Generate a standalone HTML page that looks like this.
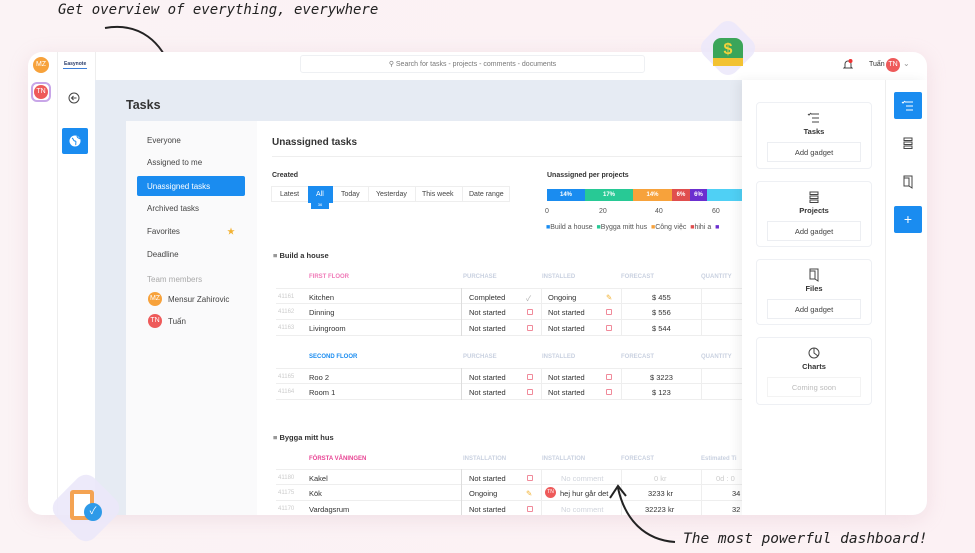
<!DOCTYPE html>
<html><head><meta charset="utf-8"><style>
*{margin:0;padding:0;box-sizing:border-box}
html,body{width:975px;height:553px;overflow:hidden}
body{background:linear-gradient(90deg,#fbf3f5,#fcf1f4);font-family:"Liberation Sans","Noto Sans CJK SC",sans-serif;position:relative;color:#333}
.a{position:absolute}
.hand{font-family:"DejaVu Sans Mono",monospace;font-style:italic;font-size:14px;color:#222;white-space:nowrap}
.card{left:28px;top:52px;width:899px;height:463px;background:#fff;border-radius:14px;overflow:hidden;box-shadow:0 4px 20px rgba(200,150,170,.2)}
.av{border-radius:50%;color:#fff;font-size:7px;text-align:center}
.nav{font-size:8px;color:#444}
.t{font-size:7px}
.row{position:absolute;left:0;height:16px;width:480px;border-bottom:1px solid #eee;font-size:7.5px;color:#333}
.row span{position:absolute;top:4px}
.row span.id{top:5px;color:#ccc;font-size:6px}
.hd{font-size:6px;color:#c9d1e0;font-weight:bold;position:absolute}
.gad{position:absolute;left:14px;width:116px;background:#fff;border:1px solid #eef0f4;border-radius:4px;text-align:center;font-size:7.5px;font-weight:bold;color:#333}
.gb{margin:0 10px;border:1px solid #eceef2;height:20px;line-height:20px;font-weight:normal;color:#444;font-size:7.5px}
.ic{fill:none;stroke:#444;stroke-width:1}
.box{display:inline-block;width:6px;height:6px;border:1px solid #f08a9a;border-radius:1px}
</style></head><body>

<div class="a hand" style="left:58px;top:2px">Get overview of everything, everywhere</div>
<svg class="a" style="left:100px;top:22px" width="80" height="55"><path d="M5 6 C40 0,62 20,72 50" fill="none" stroke="#222" stroke-width="2"/><path d="M64 40 L72 52 L78 40" fill="none" stroke="#222" stroke-width="2"/></svg>

<div class="a card">
  <div class="a av" style="left:5px;top:5px;width:16px;height:16px;background:#f7a23b;line-height:16px">MZ</div>
  <div class="a" style="left:3px;top:30px;width:20px;height:20px;border:2px solid #c8a6e8;border-radius:6px"></div>
  <div class="a av" style="left:6px;top:33px;width:14px;height:14px;background:#ee5a5a;line-height:14px">TN</div>
  <div class="a" style="left:29px;top:0;width:1px;height:463px;background:#eee"></div>
  <div class="a" style="left:36px;top:9px;font-size:5px;font-weight:bold;color:#2b3d6b">Easynote</div>
  <div class="a" style="left:35px;top:16px;width:24px;height:1px;background:#3b7dd8"></div>
  <svg class="a" style="left:40px;top:40px" width="12" height="12"><circle cx="6" cy="6" r="5" class="ic"/><path d="M8.5 6H3.5M5.5 4L3.5 6 5.5 8" class="ic"/></svg>
  <div class="a" style="left:34px;top:76px;width:26px;height:26px;background:#1a8cf0;border-radius:2px"></div>
  <svg class="a" style="left:41px;top:83px" width="12" height="12"><circle cx="6" cy="6" r="5.5" fill="#fff"/><path d="M3 3c2 1 1 3 3 3s0 3 1 4M8 1c0 2 2 2 3 3" stroke="#1a8cf0" fill="none"/></svg>
  <div class="a" style="left:67px;top:0;width:1px;height:463px;background:#eee"></div>
  <div class="a" style="left:272px;top:3px;width:345px;height:18px;border:1px solid #eef0f3;border-radius:3px;font-size:7px;color:#777;text-align:center;line-height:17px">&#9906; Search for tasks - projects - comments - documents</div>
  <svg class="a" style="left:815px;top:7px" width="10" height="11"><path d="M2 8V5a3 3 0 016 0v3l1 1H1z" class="ic"/><circle cx="7.5" cy="2" r="2" fill="#e33"/></svg>
  <div class="a" style="left:841px;top:9px;font-size:7px">Tuấn</div>
  <div class="a av" style="left:858px;top:6px;width:14px;height:14px;background:#ee5a5a;line-height:14px">TN</div>
  <div class="a" style="left:875px;top:7px;font-size:8px;color:#999">&#8964;</div>
  <div class="a" style="left:67px;top:28px;width:832px;height:435px;background:#e6ebf3"></div>
  <div class="a" style="left:98px;top:46px;font-size:12.5px;font-weight:bold;color:#333">Tasks</div>
  <div class="a" style="left:98px;top:69px;width:616px;height:394px;background:#fff"></div>
  <div class="a" style="left:98px;top:69px;width:131px;height:394px;background:#fafafb"></div>
  <div class="a nav" style="left:119px;top:84px">Everyone</div>
  <div class="a nav" style="left:119px;top:106px">Assigned to me</div>
  <div class="a nav" style="left:109px;top:124px;width:108px;height:20px;background:#1a8cf0;border-radius:2px;color:#fff;padding:6px 10px">Unassigned tasks</div>
  <div class="a nav" style="left:119px;top:152px">Archived tasks</div>
  <div class="a nav" style="left:119px;top:175px">Favorites</div>
  <div class="a" style="left:199px;top:174px;font-size:8px;color:#f2b233">★</div>
  <div class="a nav" style="left:119px;top:198px">Deadline</div>
  <div class="a nav" style="left:119px;top:223px;color:#aaa">Team members</div>
  <div class="a av" style="left:120px;top:240px;width:14px;height:14px;background:#f7a23b;line-height:14px">MZ</div>
  <div class="a nav" style="left:140px;top:243px">Mensur Zahirovic</div>
  <div class="a av" style="left:120px;top:262px;width:14px;height:14px;background:#ee5a5a;line-height:14px">TN</div>
  <div class="a nav" style="left:140px;top:265px">Tuấn</div>
  <div class="a" style="left:244px;top:85px;font-size:10px;font-weight:bold;color:#333">Unassigned tasks</div>
  <div class="a" style="left:244px;top:104px;width:470px;height:1px;background:#eee"></div>
  <div class="a t" style="left:244px;top:120px;font-weight:bold">Created</div>
  <div class="a" style="left:243px;top:134px;width:239px;height:16px;border:1px solid #eee;font-size:7px;color:#444">
    <span class="a" style="left:8px;top:4px">Latest</span>
    <span class="a" style="left:36px;top:-1px;width:25px;height:17px;background:#1a8cf0"></span>
    <span class="a" style="left:44px;top:4px;color:#fff">All</span>
    <span class="a" style="left:69px;top:4px">Today</span>
    <span class="a" style="left:96px;top:0;width:1px;height:15px;background:#eee"></span>
    <span class="a" style="left:104px;top:4px">Yesterday</span>
    <span class="a" style="left:143px;top:0;width:1px;height:15px;background:#eee"></span>
    <span class="a" style="left:150px;top:4px">This week</span>
    <span class="a" style="left:190px;top:0;width:1px;height:15px;background:#eee"></span>
    <span class="a" style="left:197px;top:4px">Date range</span>
  </div>
  <div class="a" style="left:283px;top:150px;width:18px;height:7px;background:#1a8cf0;font-size:4px;color:#fff;text-align:center">36</div>
  <div class="a t" style="left:519px;top:120px;font-weight:bold">Unassigned per projects</div>
  <div class="a" style="left:519px;top:137px;height:12px;width:195px;font-size:6px;font-weight:bold;color:#fff;line-height:12px;text-align:center">
    <span class="a" style="left:0;width:38px;background:#1a8cf0">14%</span>
    <span class="a" style="left:38px;width:48px;background:#28c995">17%</span>
    <span class="a" style="left:86px;width:39px;background:#f7a23b">14%</span>
    <span class="a" style="left:125px;width:18px;background:#e04e4e">6%</span>
    <span class="a" style="left:143px;width:17px;background:#6b2fcf">6%</span>
    <span class="a" style="left:160px;width:35px;background:#4fd0f5">&nbsp;</span>
  </div>
  <div class="a t" style="left:517px;top:156px;color:#555">0</div>
  <div class="a t" style="left:571px;top:156px;color:#555">20</div>
  <div class="a t" style="left:627px;top:156px;color:#555">40</div>
  <div class="a t" style="left:684px;top:156px;color:#555">60</div>
  <div class="a" style="left:518px;top:172px;font-size:7px;color:#555;white-space:nowrap"><span style="color:#1a8cf0">■</span>Build a house&nbsp; <span style="color:#28c995">■</span>Bygga mitt hus&nbsp; <span style="color:#f7a23b">■</span>Công việc&nbsp; <span style="color:#e04e4e">■</span>hihi a&nbsp; <span style="color:#6b2fcf">■</span></div>

  <div class="a" style="left:245px;top:199px;font-size:7.5px;font-weight:bold">&#8801; Build a house</div>
  <div class="hd" style="left:281px;top:222px;color:#f07ab8">FIRST FLOOR</div>
  <div class="hd" style="left:435px;top:222px">PURCHASE</div>
  <div class="hd" style="left:514px;top:222px">INSTALLED</div>
  <div class="hd" style="left:593px;top:222px">FORECAST</div>
  <div class="hd" style="left:673px;top:222px">QUANTITY</div>

  <div class="a" style="left:248px;top:236px;width:466px;height:48px">
    <div class="row" style="top:0;border-top:1px solid #eee"><span class="id" style="left:2px">41161</span><span style="left:33px">Kitchen</span><span style="left:193px">Completed</span><span style="left:250px;color:#aaa">✓</span><span style="left:272px">Ongoing</span><span style="left:330px;color:#f2b233">✎</span><span style="left:376px">$ 455</span></div>
    <div class="row" style="top:16px"><span class="id" style="left:2px">41162</span><span style="left:33px">Dinning</span><span style="left:193px">Not started</span><span style="left:251px"><i class="box"></i></span><span style="left:272px">Not started</span><span style="left:330px"><i class="box"></i></span><span style="left:376px">$ 556</span></div>
    <div class="row" style="top:32px"><span class="id" style="left:2px">41163</span><span style="left:33px">Livingroom</span><span style="left:193px">Not started</span><span style="left:251px"><i class="box"></i></span><span style="left:272px">Not started</span><span style="left:330px"><i class="box"></i></span><span style="left:376px">$ 544</span></div>
    <div class="a" style="left:185px;top:0;width:1px;height:48px;background:#ddd"></div>
    <div class="a" style="left:265px;top:0;width:1px;height:48px;background:#eee"></div>
    <div class="a" style="left:345px;top:0;width:1px;height:48px;background:#eee"></div>
    <div class="a" style="left:425px;top:0;width:1px;height:48px;background:#eee"></div>
  </div>
  <div class="hd" style="left:281px;top:302px;color:#1a8cf0">SECOND FLOOR</div>
  <div class="hd" style="left:435px;top:302px">PURCHASE</div>
  <div class="hd" style="left:514px;top:302px">INSTALLED</div>
  <div class="hd" style="left:593px;top:302px">FORECAST</div>
  <div class="hd" style="left:673px;top:302px">QUANTITY</div>
  <div class="a" style="left:248px;top:316px;width:466px;height:34px">
    <div class="row" style="top:0;border-top:1px solid #eee"><span class="id" style="left:2px">41165</span><span style="left:33px">Roo 2</span><span style="left:193px">Not started</span><span style="left:251px"><i class="box"></i></span><span style="left:272px">Not started</span><span style="left:330px"><i class="box"></i></span><span style="left:374px">$ 3223</span></div>
    <div class="row" style="top:16px"><span class="id" style="left:2px">41164</span><span style="left:33px">Room 1</span><span style="left:193px">Not started</span><span style="left:251px"><i class="box"></i></span><span style="left:272px">Not started</span><span style="left:330px"><i class="box"></i></span><span style="left:376px">$ 123</span></div>
    <div class="a" style="left:185px;top:0;width:1px;height:32px;background:#ddd"></div>
    <div class="a" style="left:265px;top:0;width:1px;height:32px;background:#eee"></div>
    <div class="a" style="left:345px;top:0;width:1px;height:32px;background:#eee"></div>
    <div class="a" style="left:425px;top:0;width:1px;height:32px;background:#eee"></div>
  </div>

  <div class="a" style="left:245px;top:381px;font-size:7.5px;font-weight:bold">&#8801; Bygga mitt hus</div>
  <div class="hd" style="left:281px;top:404px;color:#e84393">FÖRSTA VÅNINGEN</div>
  <div class="hd" style="left:435px;top:404px">INSTALLATION</div>
  <div class="hd" style="left:514px;top:404px">INSTALLATION</div>
  <div class="hd" style="left:593px;top:404px">FORECAST</div>
  <div class="hd" style="left:673px;top:404px">Estimated Ti</div>
  <div class="a" style="left:248px;top:417px;width:466px;height:46px;overflow:hidden">
    <div class="row" style="top:0;border-top:1px solid #eee"><span class="id" style="left:2px">41180</span><span style="left:33px">Kakel</span><span style="left:193px">Not started</span><span style="left:251px"><i class="box"></i></span><span style="left:285px;color:#d0d4dc">No comment</span><span style="left:378px;color:#ccc">0 kr</span><span style="left:440px;color:#ccc">0d : 0</span></div>
    <div class="row" style="top:16px"><span class="id" style="left:2px">41175</span><span style="left:33px">Kök</span><span style="left:193px">Ongoing</span><span style="left:250px;color:#f2b233">✎</span><span class="av" style="left:269px;top:2px;width:11px;height:11px;background:#ee5a5a;line-height:11px;font-size:5px">TN</span><span style="left:284px">hej hur går det</span><span style="left:372px">3233 kr</span><span style="left:456px">34</span></div>
    <div class="row" style="top:32px"><span class="id" style="left:2px">41170</span><span style="left:33px">Vardagsrum</span><span style="left:193px">Not started</span><span style="left:251px"><i class="box"></i></span><span style="left:285px;color:#d0d4dc">No comment</span><span style="left:369px">32223 kr</span><span style="left:456px">32</span></div>
    <div class="a" style="left:185px;top:0;width:1px;height:48px;background:#ddd"></div>
    <div class="a" style="left:265px;top:0;width:1px;height:48px;background:#eee"></div>
    <div class="a" style="left:345px;top:0;width:1px;height:48px;background:#eee"></div>
    <div class="a" style="left:425px;top:0;width:1px;height:48px;background:#eee"></div>
  </div>

  <div class="a" style="left:714px;top:28px;width:185px;height:435px;background:#fff;box-shadow:-4px 0 10px rgba(0,0,0,.06)"></div>
  <div class="a" style="left:857px;top:28px;width:1px;height:435px;background:#eee"></div>
  <div class="gad" style="left:728px;top:50px;height:67px"><svg width="14" height="14" style="margin-top:8px"><path d="M4 3h8M5 7h7M5 11h7M1 3l1 1 2-2" class="ic"/></svg><div>Tasks</div><div class="gb" style="margin-top:6px">Add gadget</div></div>
  <div class="gad" style="left:728px;top:129px;height:66px"><svg width="14" height="14" style="margin-top:8px"><rect x="3" y="2" width="8" height="2.5" class="ic"/><rect x="3" y="6" width="8" height="2.5" class="ic"/><rect x="3" y="10" width="8" height="2.5" class="ic"/></svg><div>Projects</div><div class="gb" style="margin-top:6px">Add gadget</div></div>
  <div class="gad" style="left:728px;top:207px;height:66px"><svg width="14" height="14" style="margin-top:8px"><path d="M3 1h8v12l-3-2V3H3zM3 1v10h5" class="ic"/></svg><div>Files</div><div class="gb" style="margin-top:6px">Add gadget</div></div>
  <div class="gad" style="left:728px;top:285px;height:68px"><svg width="14" height="14" style="margin-top:8px"><circle cx="7" cy="7" r="5" class="ic"/><path d="M7 2v5l4 3" class="ic"/></svg><div>Charts</div><div class="gb" style="margin-top:6px;color:#bbb;border-color:#f3f3f3">Coming soon</div></div>
  <div class="a" style="left:866px;top:40px;width:28px;height:27px;background:#1a8cf0;border-radius:2px"></div>
  <svg class="a" style="left:873px;top:47px" width="14" height="14"><path d="M4 3h8M5 7h7M5 11h7M1 3l1 1 2-2" stroke="#fff" fill="none"/></svg>
  <svg class="a" style="left:873px;top:84px" width="14" height="14"><rect x="3" y="2" width="8" height="2.5" class="ic"/><rect x="3" y="6" width="8" height="2.5" class="ic"/><rect x="3" y="10" width="8" height="2.5" class="ic"/></svg>
  <svg class="a" style="left:873px;top:123px" width="14" height="14"><path d="M3 1h8v12l-3-2V3H3zM3 1v10h5" class="ic"/></svg>
  <div class="a" style="left:866px;top:154px;width:28px;height:27px;background:#1a8cf0;border-radius:2px;color:#fff;text-align:center;line-height:27px;font-size:14px">+</div>
</div>

<div class="a" style="left:700px;top:20px;width:56px;height:56px;background:rgba(235,232,250,.85);border-radius:14px;transform:rotate(45deg) scale(.8)"></div>
<div class="a" style="left:713px;top:38px;width:30px;height:28px;background:#3ba55a;border-radius:8px 8px 4px 4px;color:#f6d23b;text-align:center;font-weight:bold;font-size:16px;line-height:24px">$</div>
<div class="a" style="left:713px;top:58px;width:30px;height:8px;background:#f2c232"></div>
<div class="a" style="left:50px;top:472px;width:72px;height:72px;background:rgba(235,232,250,.9);border-radius:16px;transform:rotate(45deg) scale(.75)"></div>
<div class="a" style="left:70px;top:490px;width:24px;height:30px;background:#f4a352;border-radius:3px"></div>
<div class="a" style="left:74px;top:494px;width:16px;height:22px;background:#fff"></div>
<div class="a" style="left:84px;top:503px;width:18px;height:18px;background:#2e9ae8;border-radius:50%;color:#fff;font-size:10px;text-align:center;line-height:18px">✓</div>

<svg class="a" style="left:600px;top:480px" width="80" height="70"><path d="M75 62 C45 60,25 40,18 8" fill="none" stroke="#222" stroke-width="2"/><path d="M10 18 L18 6 L26 16" fill="none" stroke="#222" stroke-width="2"/></svg>
<div class="a hand" style="left:683px;top:531px;font-size:14.5px">The most powerful dashboard!</div>
</body></html>
